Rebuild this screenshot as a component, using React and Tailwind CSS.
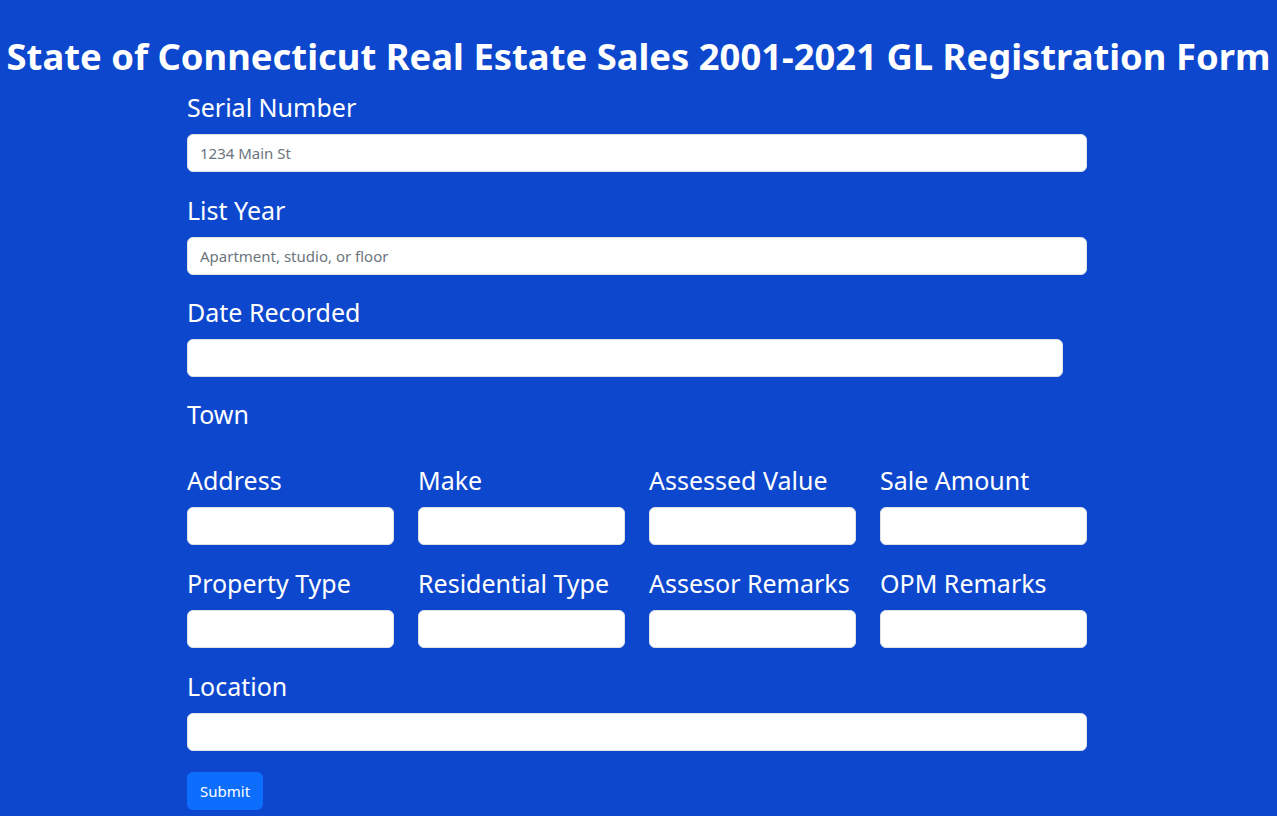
import React from 'react';

const Field = ({ label, placeholder = "", className = "" }) => (
  <div className={className}>
    <label className="block text-[25px] leading-[36px] text-white mb-[9px]">{label}</label>
    <input
      type="text"
      placeholder={placeholder}
      className="block w-full h-[38px] px-[12px] rounded-[6px] bg-white border border-[#dee2e6] text-[15px] text-[#212529] placeholder:text-[#6c757d] outline-none"
    />
  </div>
);

export default function App() {
  const row1 = ["Address", "Make", "Assessed Value", "Sale Amount"];
  const row2 = ["Property Type", "Residential Type", "Assesor Remarks", "OPM Remarks"];

  return (
    <div className="min-h-[816px] bg-[#0c47cd] font-['Noto_Sans','Open_Sans',sans-serif] pt-[32px]">
      <h1 className="text-center text-white font-bold text-[36.4px] leading-[48px] whitespace-nowrap mb-[9px]">
        State of Connecticut Real Estate Sales 2001-2021 GL Registration Form
      </h1>
      <form className="w-[900px] ml-[187px]" onSubmit={(e) => e.preventDefault()}>
        <Field label="Serial Number" placeholder="1234 Main St" className="mb-[20px]" />
        <Field label="List Year" placeholder="Apartment, studio, or floor" className="mb-[19px]" />
        <Field label="Date Recorded" className="mb-[19px] w-[876px]" />
        <div className="text-[25px] leading-[36px] text-white mb-[30px]">Town</div>
        <div className="grid grid-cols-4 gap-x-[24px] gap-y-[20px] mb-[20px]">
          {row1.map((l) => (
            <Field key={l} label={l} />
          ))}
          {row2.map((l) => (
            <Field key={l} label={l} />
          ))}
        </div>
        <Field label="Location" className="mb-[21px]" />
        <button
          type="submit"
          className="h-[38px] px-[13px] rounded-[6px] bg-[#0d6efd] text-white text-[15px]"
        >
          Submit
        </button>
      </form>
    </div>
  );
}
